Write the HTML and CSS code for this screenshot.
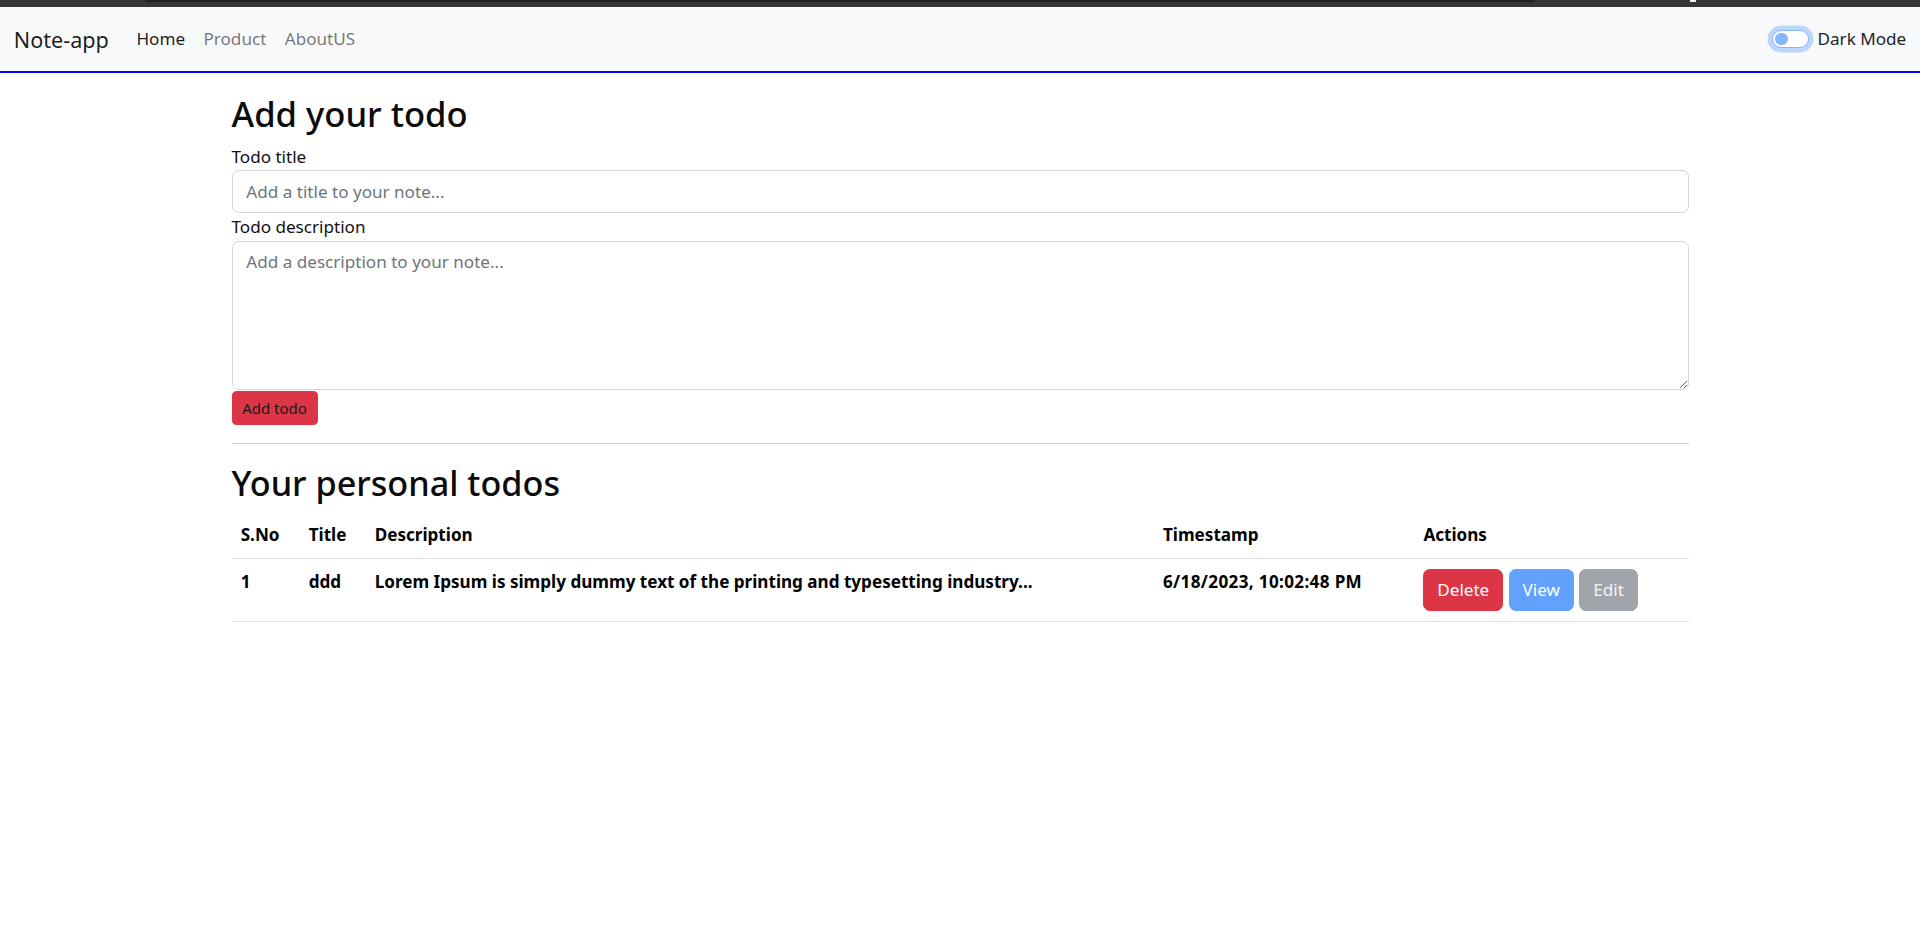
FILE: index.html
```html
<!DOCTYPE html>
<html lang="en">
<head>
<meta charset="utf-8">
<title>Note-app</title>
<link rel="stylesheet" href="styles.css">
</head>
<body>
<div class="chrome"><div class="chrome-tab"></div><div class="chrome-dot"></div></div>
<nav class="navbar">
  <a class="brand" href="#">Note-app</a>
  <ul class="nav">
    <li><a class="nav-link active" href="#">Home</a></li>
    <li><a class="nav-link" href="#">Product</a></li>
    <li><a class="nav-link" href="#">AboutUS</a></li>
  </ul>
  <label class="switch-wrap">
    <span class="switch"><span class="knob"></span></span>
    <span class="switch-label">Dark Mode</span>
  </label>
</nav>
<main class="container">
  <h2 class="heading">Add your todo</h2>
  <form class="todo-form">
    <label class="form-label" for="title">Todo title</label>
    <input class="form-control" id="title" type="text" placeholder="Add a title to your note...">
    <label class="form-label" for="desc">Todo description</label>
    <textarea class="form-control area" id="desc" placeholder="Add a description to your note..."></textarea>
    <button class="btn-add" type="button">Add todo</button>
  </form>
  <hr class="divider">
  <h2 class="heading heading-list">Your personal todos</h2>
  <table class="table">
    <thead>
      <tr><th class="c-no">S.No</th><th class="c-title">Title</th><th class="c-desc">Description</th><th class="c-time">Timestamp</th><th class="c-act">Actions</th></tr>
    </thead>
    <tbody>
      <tr>
        <td>1</td>
        <td>ddd</td>
        <td>Lorem Ipsum is simply dummy text of the printing and typesetting industry...</td>
        <td class="time">6/18/2023, 10:02:48 PM</td>
        <td class="act"><div class="actions"><button class="btn btn-danger" type="button">Delete</button><button class="btn btn-view" type="button">View</button><button class="btn btn-edit" type="button">Edit</button></div></td>
      </tr>
    </tbody>
  </table>
</main>
</body>
</html>
```
FILE: styles.css
```css
* { box-sizing: border-box; }
html, body { margin: 0; padding: 0; }
body {
  font-family: "Noto Sans", "Open Sans", sans-serif;
  font-size: 17.1px;
  line-height: 27.6px;
  color: #212529;
  background: #fff;
}

/* top browser strip */
.chrome {
  height: 7px;
  background: #363636;
  display: flex;
  align-items: flex-start;
}
.chrome-tab {
  margin-left: 145px;
  width: 1390px;
  height: 2px;
  background: #202020;
  border-radius: 0 0 3px 3px;
}
.chrome-dot {
  margin-left: 155px;
  width: 6px;
  height: 2px;
  background: #f2f2f2;
}

/* navbar */
.navbar {
  height: 66px;
  background: #f8f9fa;
  border-bottom: 2px solid #0000ff;
  display: flex;
  align-items: center;
  padding: 0 13.8px;
}
.brand {
  font-size: 21.6px;
  line-height: 32px;
  color: rgba(0, 0, 0, 0.9);
  text-decoration: none;
  margin-right: 18.4px;
  padding-top: 1px;
}
.nav {
  list-style: none;
  margin: 0;
  padding: 0;
  display: flex;
  flex: 1;
}
.nav-link {
  display: block;
  padding: 0 9.2px;
  color: rgba(0, 0, 0, 0.55);
  text-decoration: none;
}
.nav-link.active { color: rgba(0, 0, 0, 0.9); }

.switch-wrap {
  display: flex;
  align-items: center;
  gap: 9px;
}
.switch {
  width: 36.8px;
  height: 18.4px;
  border: 1px solid #86b7fe;
  border-radius: 9.2px;
  background: #fff;
  box-shadow: 0 0 0 4.4px rgba(13, 110, 253, 0.25);
  display: flex;
  align-items: center;
  padding-left: 2.5px;
}
.knob {
  width: 12.6px;
  height: 12.6px;
  border-radius: 50%;
  background: #86b7fe;
}
.switch-label { color: #212529; }

/* main */
.container {
  width: 1457px;
  margin: 0 auto;
  padding-top: 18.5px;
}
.heading {
  font-size: 34.6px;
  line-height: 44px;
  font-weight: 500;
  margin: 0 0 7px;
  color: #0b0b0b;
}
.heading-list {
  font-size: 34.2px;
  margin-bottom: 9.5px;
}
.todo-form { display: flex; flex-direction: column; align-items: flex-start; }
.form-label { display: block; color: #111; }
.form-control {
  display: block;
  width: 100%;
  height: 43px;
  font: inherit;
  color: #212529;
  background: #fff;
  border: 1px solid #d3d6da;
  border-radius: 6.9px;
  padding: 6.9px 13.8px;
  margin: 0;
}
.form-control::placeholder { color: #6c757d; }
.area {
  height: 149px;
  resize: vertical;
  padding-top: 6px;
}
.btn-add {
  margin-top: 1px;
  height: 34px;
  width: 86px;
  padding: 0;
  font-family: inherit;
  font-size: 15px;
  color: #1a1a1a;
  background: #dc3545;
  border: 1px solid #dc3545;
  border-radius: 4.6px;
}
.divider {
  margin: 18px 0 17px;
  border: 0;
  border-top: 1px solid #c8c8c8;
}

/* table */
.table {
  width: 100%;
  border-collapse: collapse;
  table-layout: fixed;
  color: #000;
  font-weight: 700;
}
.table th, .table td {
  text-align: left;
  vertical-align: top;
  border-bottom: 1px solid #dee2e6;
  white-space: nowrap;
}
.table th { padding: 7px 9.2px 9.4px; }
.c-no { width: 68px; }
.c-title { width: 66px; }
.c-desc { width: 788.3px; }
.c-time { width: 260.4px; }
.c-act { width: 274.3px; }
.table td { padding: 8.5px 9.2px 10.9px; }
.table td.time { letter-spacing: 0.35px; }
.table td.act { padding-top: 9.6px; padding-bottom: 10.2px; }
.actions { display: flex; gap: 5.5px; }
.btn {
  height: 42px;
  padding: 0 12.9px;
  font-family: inherit;
  font-size: 17.1px;
  font-weight: 400;
  color: #fff;
  border-radius: 6.9px;
  border: 1px solid transparent;
}
.btn-danger { background: #dc3545; border-color: #dc3545; }
.btn-view { background: #62a1fe; border-color: #62a1fe; }
.btn-edit { background: #9fa5aa; border-color: #9fa5aa; color: #f4f4f4; }
```
